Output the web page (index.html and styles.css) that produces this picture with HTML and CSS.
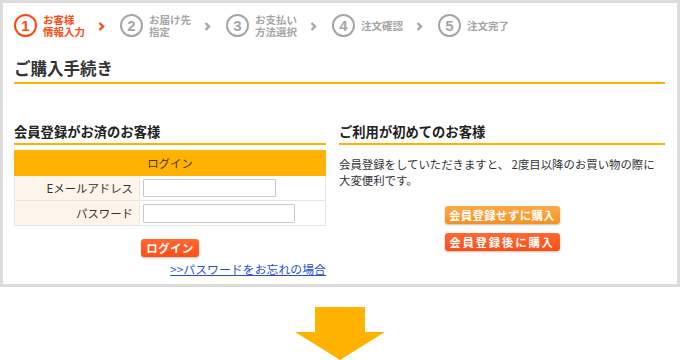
FILE: index.html
```html
<!DOCTYPE html>
<html lang="ja">
<head>
<meta charset="utf-8">
<link rel="stylesheet" href="styles.css">
</head>
<body>
<div class="frame">
  <ol class="steps">
    <li class="step active">
      <span class="num">1</span>
      <span class="label"><span class="ln">お客様</span><span class="ln">情報入力</span></span>
    </li>
    <li class="sep active"><svg width="7" height="9" viewBox="0 0 7 9"><polyline points="1.5,1 5,4.5 1.5,8" fill="none" stroke="currentColor" stroke-width="2.4"/></svg></li>
    <li class="step">
      <span class="num">2</span>
      <span class="label"><span class="ln">お届け先</span><span class="ln">指定</span></span>
    </li>
    <li class="sep"><svg width="7" height="9" viewBox="0 0 7 9"><polyline points="1.5,1 5,4.5 1.5,8" fill="none" stroke="currentColor" stroke-width="2.4"/></svg></li>
    <li class="step">
      <span class="num">3</span>
      <span class="label"><span class="ln">お支払い</span><span class="ln">方法選択</span></span>
    </li>
    <li class="sep"><svg width="7" height="9" viewBox="0 0 7 9"><polyline points="1.5,1 5,4.5 1.5,8" fill="none" stroke="currentColor" stroke-width="2.4"/></svg></li>
    <li class="step">
      <span class="num">4</span>
      <span class="label"><span class="ln">注文確認</span></span>
    </li>
    <li class="sep"><svg width="7" height="9" viewBox="0 0 7 9"><polyline points="1.5,1 5,4.5 1.5,8" fill="none" stroke="currentColor" stroke-width="2.4"/></svg></li>
    <li class="step">
      <span class="num">5</span>
      <span class="label"><span class="ln">注文完了</span></span>
    </li>
  </ol>

  <h1 class="title">ご購入手続き</h1>

  <div class="columns">
    <section class="col col-left">
      <h2 class="heading">会員登録がお済のお客様</h2>
      <table class="login-table">
        <tr><th colspan="2" class="login-head">ログイン</th></tr>
        <tr>
          <td class="lbl">Eメールアドレス</td>
          <td class="fld"><input type="text" class="inp inp-mail"></td>
        </tr>
        <tr>
          <td class="lbl">パスワード</td>
          <td class="fld"><input type="password" class="inp inp-pass"></td>
        </tr>
      </table>
      <div class="btn-center"><button class="btn btn-red btn-login">ログイン</button></div>
      <div class="forgot"><a href="#">&gt;&gt;パスワードをお忘れの場合</a></div>
    </section>
    <section class="col col-right">
      <h2 class="heading">ご利用が初めてのお客様</h2>
      <p class="desc">会員登録をしていただきますと、 2度目以降のお買い物の際に<br>大変便利です。</p>
      <div class="btn-stack">
        <button class="btn btn-orange">会員登録せずに購入</button>
        <button class="btn btn-red wide">会員登録後に購入</button>
      </div>
    </section>
  </div>
</div>
<div class="down">
  <svg width="90" height="54" viewBox="0 0 90 54"><polygon points="20,0 70,0 70,25 90,25 45,53 0,25 20,25" fill="#ffb300"/></svg>
</div>
</body>
</html>
```

FILE: styles.css
```css
* { box-sizing: border-box; }
html, body { margin: 0; padding: 0; background: #fff; }
body {
  width: 680px;
  height: 360px;
  overflow: hidden;
  font-family: "Noto Sans CJK JP", "Noto Sans", sans-serif;
  color: #333;
}
.frame {
  height: 287px;
  border: 3px solid #dcdcdc;
  padding: 11px 12px 0 11px;
}
.steps {
  list-style: none;
  margin: 0;
  padding: 0;
  display: flex;
  align-items: center;
  height: 23px;
}
.step {
  display: flex;
  align-items: center;
  color: #a6a6a6;
}
.num {
  width: 23px;
  height: 23px;
  border: 2.5px solid currentColor;
  border-radius: 50%;
  display: flex;
  align-items: center;
  justify-content: center;
  font-family: "Liberation Sans", Arial, sans-serif;
  font-weight: bold;
  font-size: 15px;
  line-height: 1;
  flex: none;
}
.label {
  margin-left: 6px;
  display: flex;
  flex-direction: column;
  gap: 1px;
  font-size: 10.5px;
  font-weight: bold;
  white-space: nowrap;
}
.ln {
  display: block;
  height: 11px;
  line-height: 11px;
}
.step.active, .sep.active { color: #ff4a12; }
.sep {
  color: #a6a6a6;
  display: flex;
  align-items: center;
  margin: 1px 15px 0 13px;
}
.sep svg { display: block; }
.title {
  margin: 21px 0 0;
  font-size: 16.5px;
  line-height: 20px;
  font-weight: bold;
  color: #333;
  padding: 0 0 4px;
  border-bottom: 2px solid #ffb300;
}
.columns {
  display: flex;
  gap: 13px;
  margin-top: 40px;
}
.col-left { width: 312px; }
.col-right { width: 326px; }
.heading {
  margin: 0;
  font-size: 13.3px;
  line-height: 16px;
  font-weight: bold;
  color: #222;
  padding-bottom: 3px;
  border-bottom: 2px solid #ffb300;
}
.login-table {
  margin-top: 5px;
  width: 100%;
  border-collapse: collapse;
  font-size: 11.4px;
}
.login-head {
  background: #ffb300;
  color: #4a3300;
  font-weight: normal;
  height: 25px;
  padding: 0;
  text-align: center;
  border: 1px solid #ffb300;
}
.lbl {
  width: 125px;
  background: #fdf4ea;
  text-align: right;
  padding: 0 6px 0 0;
  height: 25px;
  border: 1px solid #e6e6e6;
  color: #333;
}
.fld {
  padding: 0 0 0 3px;
  border: 1px solid #e6e6e6;
  background: #fff;
}
.inp {
  display: block;
  height: 18px;
  border: 1px solid #c9c9c9;
  border-radius: 1px;
  padding: 0;
  margin: 0;
  background: #fff;
}
.inp-mail { width: 133px; }
.inp-pass { width: 152px; height: 19px; }
.btn-center {
  display: flex;
  justify-content: center;
  margin-top: 13px;
}
.btn {
  height: 18px;
  border: none;
  border-radius: 3px;
  color: #fff;
  font-family: "Noto Sans CJK JP", sans-serif;
  font-weight: bold;
  font-size: 11.4px;
  line-height: 18px;
  padding: 0;
  box-shadow: 0 1px 2px rgba(0,0,0,0.25);
  cursor: pointer;
}
.btn-red { background: linear-gradient(#ff6a33, #ff4d14); }
.btn-orange { background: linear-gradient(#ffab4a, #f79022); }
.btn-login { width: 58px; letter-spacing: 0.5px; }
.forgot {
  text-align: right;
  margin-top: 5px;
  font-size: 11.9px;
  line-height: 14px;
}
.forgot a { color: #1f4fd6; text-decoration: underline; }
.desc {
  margin: 11px 0 0;
  font-size: 11.4px;
  line-height: 16px;
  color: #333;
}
.btn-stack {
  display: flex;
  flex-direction: column;
  align-items: center;
  gap: 9px;
  margin-top: 18px;
}
.btn-stack .btn { width: 115px; letter-spacing: 0.4px; }
.btn-stack .wide { letter-spacing: 1.8px; }
.down {
  display: flex;
  justify-content: center;
  padding-top: 20px;
}
.down svg { display: block; }
```
